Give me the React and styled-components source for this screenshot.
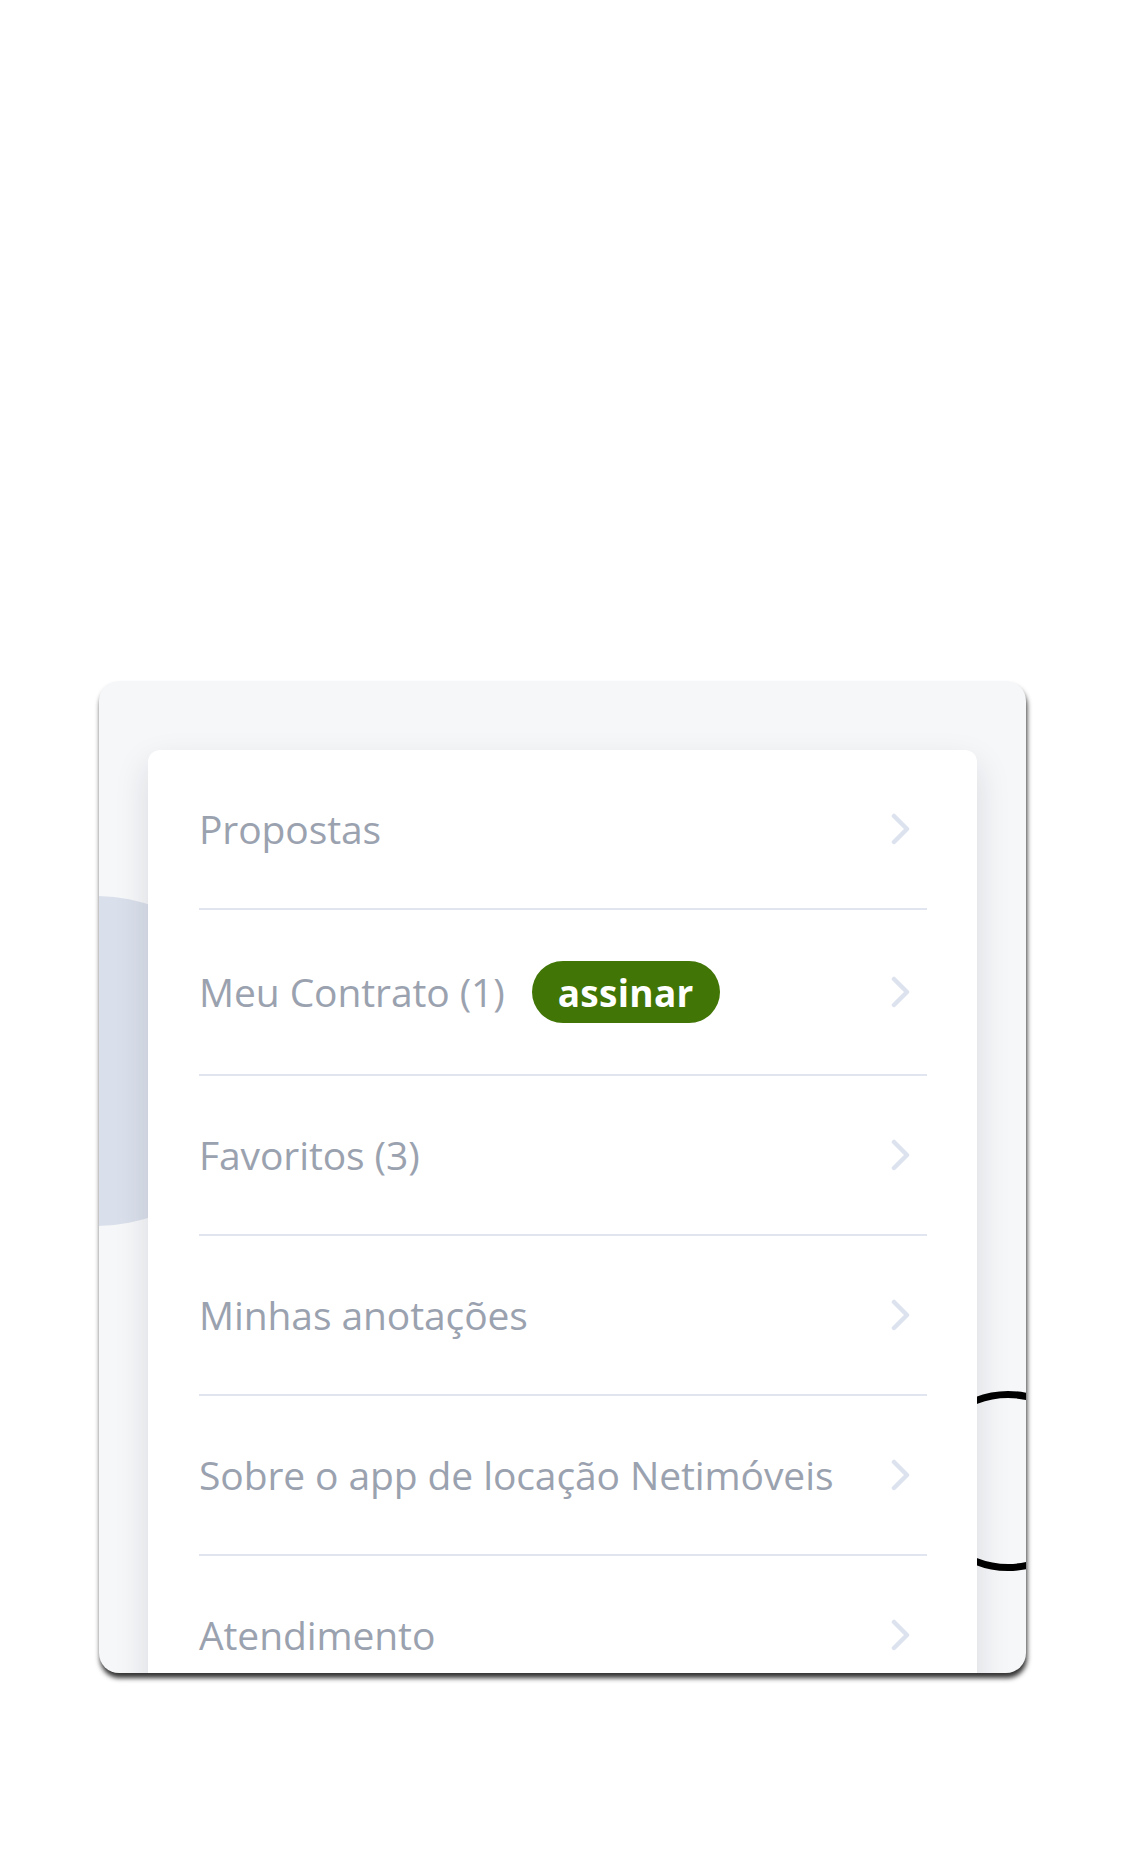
import React from "react";
import styled, { createGlobalStyle } from "styled-components";

const GlobalStyle = createGlobalStyle`
  html, body {
    margin: 0;
    padding: 0;
    background: #ffffff;
  }
  body {
    font-family: "Open Sans", "Noto Sans", sans-serif;
  }
`;

const Page = styled.div`
  width: 1125px;
  min-height: 1872px;
  display: flex;
  justify-content: center;
  align-items: flex-start;
  padding-top: 681px;
  box-sizing: border-box;
  background: #ffffff;
`;

const Sheet = styled.div`
  position: relative;
  width: 927px;
  height: 992px;
  box-sizing: border-box;
  padding: 69px 49px 0;
  background: #f6f7f9;
  border-radius: 20px;
  overflow: hidden;
  box-shadow: 1px 5px 5px rgba(0, 0, 0, 0.8);
`;

const Blob = styled.div`
  position: absolute;
  left: -167px;
  top: 215px;
  width: 330px;
  height: 330px;
  border-radius: 50%;
  background: #dae0eb;
`;

const Ring = styled.div`
  position: absolute;
  left: 819px;
  top: 710px;
  width: 180px;
  height: 180px;
  box-sizing: border-box;
  border-radius: 50%;
  border: 7px solid #000000;
`;

const Card = styled.div`
  position: relative;
  z-index: 1;
  background: #ffffff;
  border-radius: 12px;
  padding: 0 50px 0 51px;
  box-shadow: 0 14px 34px rgba(20, 25, 40, 0.13);
`;

const Row = styled.div`
  display: flex;
  align-items: center;
  padding: ${(p) => (p.$tall ? "51px 0" : "49px 0")};
  border-bottom: 2px solid #e0e5f0;
  box-sizing: border-box;
`;

const Label = styled.span`
  font-family: "Open Sans", "Noto Sans", sans-serif;
  font-size: 39px;
  line-height: 60px;
  color: #9ba2af;
  letter-spacing: -0.1px;
  white-space: nowrap;
`;

const Badge = styled.span`
  display: inline-flex;
  align-items: center;
  justify-content: center;
  height: 62px;
  margin-left: 27px;
  padding: 0 26px;
  border-radius: 31px;
  background: #417505;
  color: #ffffff;
  font-family: "Open Sans", "Noto Sans", sans-serif;
  font-weight: 700;
  font-size: 37px;
  letter-spacing: 0.3px;
  line-height: 1;
`;

const Spacer = styled.span`
  flex: 1;
`;

const Chevron = styled.svg`
  width: 20px;
  height: 32px;
  margin-right: 16px;
  flex-shrink: 0;
`;

function ChevronIcon() {
  return (
    <Chevron viewBox="0 0 20 32" fill="none">
      <polyline
        points="3,3 16,16 3,29"
        stroke="#dde3ee"
        strokeWidth="4.5"
        strokeLinecap="round"
        strokeLinejoin="round"
      />
    </Chevron>
  );
}

const items = [
  { label: "Propostas" },
  { label: "Meu Contrato (1)", badge: "assinar" },
  { label: "Favoritos (3)" },
  { label: "Minhas anotações" },
  { label: "Sobre o app de locação Netimóveis" },
  { label: "Atendimento" },
];

export default function App() {
  return (
    <>
      <GlobalStyle />
      <Page>
        <Sheet>
          <Blob />
          <Ring />
          <Card>
            {items.map((it) => (
              <Row key={it.label} $tall={!!it.badge}>
                <Label>{it.label}</Label>
                {it.badge && <Badge>{it.badge}</Badge>}
                <Spacer />
                <ChevronIcon />
              </Row>
            ))}
          </Card>
        </Sheet>
      </Page>
    </>
  );
}
